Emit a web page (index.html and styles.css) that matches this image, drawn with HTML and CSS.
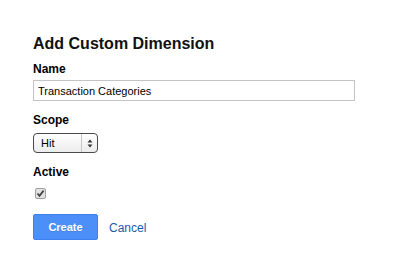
FILE: index.html
```html
<!DOCTYPE html>
<html>
  <head>
    <title>Add Custom Dimension</title>
    <link rel="stylesheet" href="styles.css">
  </head>
  <body>
    <div class="dialog">
      <h1 class="title">Add Custom Dimension</h1>

      <label class="label" for="name">Name</label>
      <input type="text" id="name" class="text-input" value="Transaction Categories" />

      <div class="label">Scope</div>
      <div class="select">
        <span class="select-value">Hit</span>
        <span class="select-arrows">
          <svg width="6" height="9" viewBox="0 0 6 9">
            <path d="M0.5 3.5 L3 0.5 L5.5 3.5 Z" fill="#333" />
            <path d="M0.5 5.5 L3 8.5 L5.5 5.5 Z" fill="#333" />
          </svg>
        </span>
      </div>

      <div class="label">Active</div>
      <div class="checkbox">
        <svg width="11" height="11" viewBox="0 0 11 11">
          <rect x="0.5" y="0.5" width="10" height="10" rx="1.5" fill="#e2e2e2" stroke="#a0a0a0" />
          <path d="M2.5 5.5 L4.5 7.8 L8.6 2.6" fill="none" stroke="#444" stroke-width="1.8" />
        </svg>
      </div>

      <div class="actions">
        <button class="button primary">Create</button>
        <a href="#" class="link">Cancel</a>
      </div>
    </div>
  </body>
</html>
```

FILE: styles.css
```css
/* Page */
body {
  margin: 0;
  background-color: #fff;
  font-family: "Liberation Sans", Arial, sans-serif;
  color: #000;
}

/* Dialog body */
.dialog {
  padding: 34px 33px 0;
}

.title {
  margin: 0 0 8px;
  font-size: 16px;
  line-height: 20px;
  font-weight: bold;
  color: #111;
}

/* Field labels */
.label {
  display: block;
  font-size: 12px;
  line-height: 15px;
  font-weight: bold;
}

/* Name input */
.text-input {
  display: block;
  width: 322px;
  height: 21px;
  margin: 3px 0 12px;
  padding: 0 4px;
  border: 1px solid #c4c4c4;
  box-sizing: border-box;
  font-family: "Liberation Sans", Arial, sans-serif;
  font-size: 11px;
  color: #000;
  outline: none;
}

/* Scope select */
.select {
  display: flex;
  align-items: stretch;
  width: 65px;
  height: 20px;
  margin: 5px 0 12px;
  border: 1px solid #4a4a4a;
  border-radius: 4px;
  box-sizing: border-box;
  background: linear-gradient(#ffffff, #ececec);
  font-size: 11px;
}

.select-value {
  flex: 1;
  padding-left: 7px;
  line-height: 18px;
  color: #000;
}

.select-arrows {
  display: flex;
  align-items: center;
  justify-content: center;
  width: 15px;
  border-left: 1px solid #c8c8c8;
}

/* Active checkbox */
.checkbox {
  margin: 8px 0 0 2px;
  height: 11px;
}

.checkbox svg {
  display: block;
}

/* Buttons */
.actions {
  display: flex;
  align-items: center;
  gap: 11px;
  margin-top: 15px;
}

.button {
  width: 65px;
  height: 26px;
  border: 1px solid #3b82f0;
  border-radius: 2px;
  font-family: "Liberation Sans", Arial, sans-serif;
  font-size: 11px;
  font-weight: bold;
  cursor: pointer;
}

.button.primary {
  background-color: #4d8ff8;
  color: #fff;
  text-shadow: 0 1px 0 rgba(0, 0, 0, 0.1);
}

.link {
  font-size: 12px;
  color: #1d5ba8;
  text-decoration: none;
  margin-top: 2px;
}
```
